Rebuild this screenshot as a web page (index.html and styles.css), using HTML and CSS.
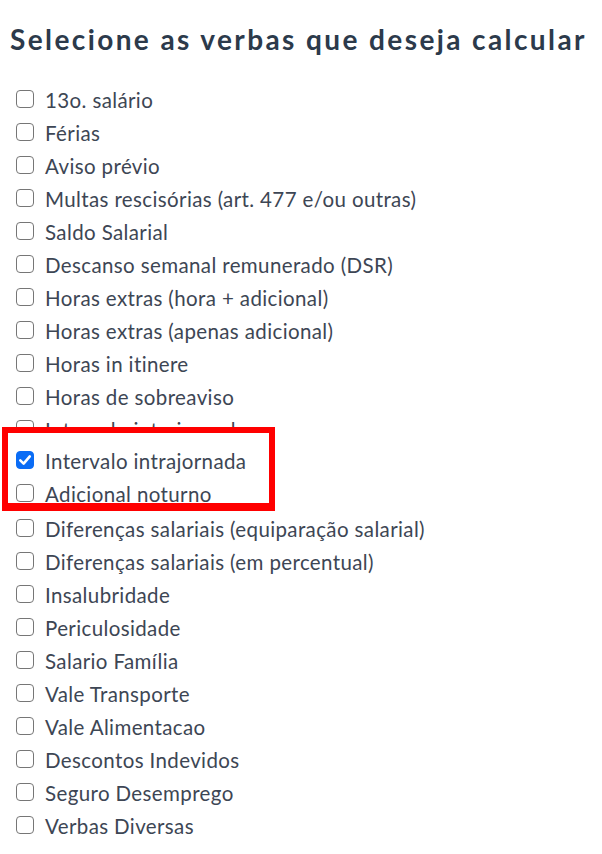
FILE: index.html
```html
<!DOCTYPE html>
<html lang="pt-BR">
<head>
<meta charset="utf-8">
<title>Verbas</title>
<link rel="stylesheet" href="styles.css">
</head>
<body>
<div class="page">
  <h1 class="title">Selecione as verbas que deseja calcular</h1>
  <ul class="list">
    <li class="item"><span class="box"></span><span class="label">13o. salário</span></li>
    <li class="item"><span class="box"></span><span class="label">Férias</span></li>
    <li class="item"><span class="box"></span><span class="label">Aviso prévio</span></li>
    <li class="item"><span class="box"></span><span class="label">Multas rescisórias (art. 477 e/ou outras)</span></li>
    <li class="item"><span class="box"></span><span class="label">Saldo Salarial</span></li>
    <li class="item"><span class="box"></span><span class="label">Descanso semanal remunerado (DSR)</span></li>
    <li class="item"><span class="box"></span><span class="label">Horas extras (hora + adicional)</span></li>
    <li class="item"><span class="box"></span><span class="label">Horas extras (apenas adicional)</span></li>
    <li class="item"><span class="box"></span><span class="label">Horas in itinere</span></li>
    <li class="item"><span class="box"></span><span class="label">Horas de sobreaviso</span></li>
    <li class="item"><span class="box"></span><span class="label">Intervalo intrajornada</span></li>
    <li class="spacer" aria-hidden="true"></li>
    <li class="item"><span class="box"></span><span class="label">Diferenças salariais (equiparação salarial)</span></li>
    <li class="item"><span class="box"></span><span class="label">Diferenças salariais (em percentual)</span></li>
    <li class="item"><span class="box"></span><span class="label">Insalubridade</span></li>
    <li class="item"><span class="box"></span><span class="label">Periculosidade</span></li>
    <li class="item"><span class="box"></span><span class="label">Salario Família</span></li>
    <li class="item"><span class="box"></span><span class="label">Vale Transporte</span></li>
    <li class="item"><span class="box"></span><span class="label">Vale Alimentacao</span></li>
    <li class="item"><span class="box"></span><span class="label">Descontos Indevidos</span></li>
    <li class="item"><span class="box"></span><span class="label">Seguro Desemprego</span></li>
    <li class="item"><span class="box"></span><span class="label">Verbas Diversas</span></li>
  </ul>
  <div class="highlight">
    <div class="item"><span class="box box-checked"><svg class="check" viewBox="0 0 18 18" width="18" height="18"><path d="M4.3 9.4 L7.6 12.6 L13.8 5.4" fill="none" stroke="#ffffff" stroke-width="2.6" stroke-linecap="round" stroke-linejoin="round"/></svg></span><span class="label">Intervalo intrajornada</span></div>
    <div class="item"><span class="box"></span><span class="label">Adicional noturno</span></div>
  </div>
</div>
</body>
</html>
```
FILE: styles.css
```css
html, body {
  margin: 0;
  padding: 0;
  background: #ffffff;
}

.page {
  position: relative;
  padding: 22px 10px 0 10px;
  font-family: "Lato", "Liberation Sans", sans-serif;
}

.title {
  margin: 0;
  font-size: 28px;
  line-height: 34px;
  font-weight: 700;
  letter-spacing: 2.4px;
  color: #2c3a4b;
  white-space: nowrap;
}

.list {
  list-style: none;
  margin: 27px 0 0 0;
  padding: 0 0 0 6px;
}

.item {
  display: flex;
  align-items: center;
  height: 33px;
}

.spacer {
  height: 66px;
}

.box {
  box-sizing: border-box;
  flex: 0 0 18px;
  width: 18px;
  height: 18px;
  border: 1.5px solid #767676;
  border-radius: 4px;
  background: #ffffff;
  margin-right: 11px;
  margin-top: -1px;
  position: relative;
}

.box-checked {
  background: #0a6cf5;
  border-color: #0a6cf5;
}

.check {
  position: absolute;
  left: -1.5px;
  top: -1.5px;
}

.label {
  font-size: 20.5px;
  letter-spacing: 0.38px;
  color: #3d4654;
  white-space: nowrap;
}

.highlight {
  position: absolute;
  left: 2px;
  top: 427px;
  box-sizing: border-box;
  width: 273px;
  height: 84px;
  padding: 11px 0 0 8px;
  border: 6px solid #ff0000;
  border-bottom-width: 8px;
  background: #ffffff;
  overflow: hidden;
}
```
